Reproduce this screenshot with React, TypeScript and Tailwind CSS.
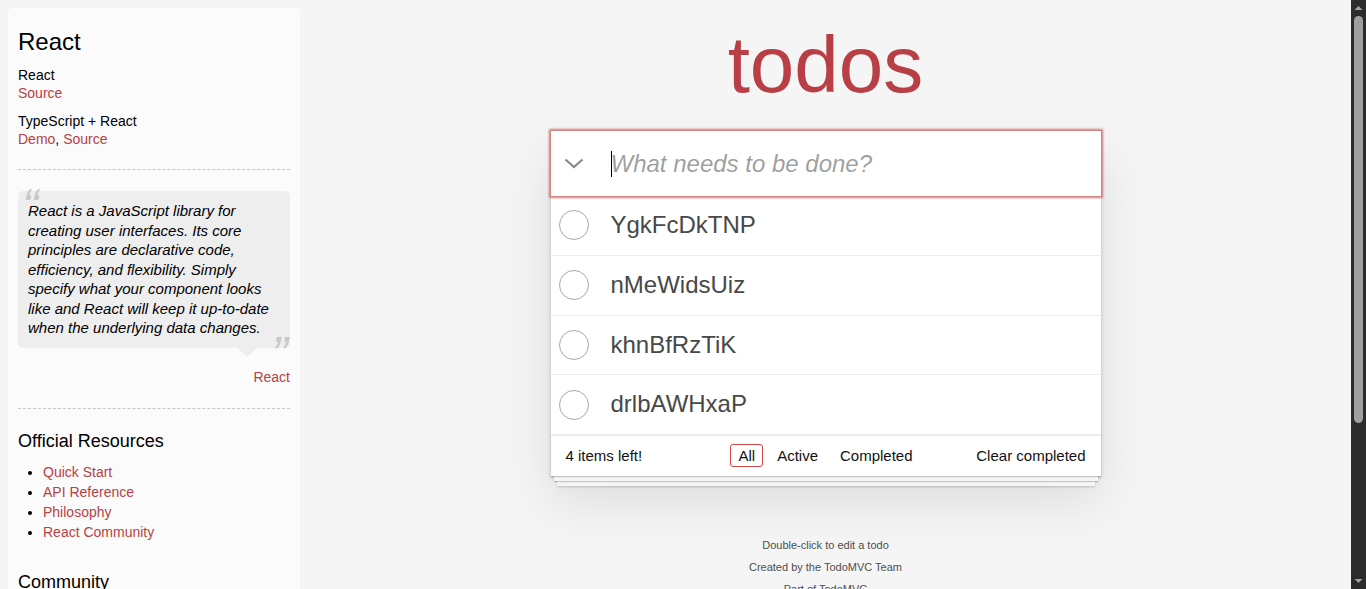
import React from "react";

const todos = ["YgkFcDkTNP", "nMeWidsUiz", "khnBfRzTiK", "drlbAWHxaP"];

function Sidebar() {
  return (
    <aside className="mt-2 ml-2 h-[620px] w-[292px] shrink-0 overflow-hidden rounded-[5px] bg-[#fbfbfb] p-[10px] text-[14px] leading-[1.4] text-black">
      <h3 className="mt-[10px] mb-[10px] text-[24px] leading-[1.2]">React</h3>
      <h5 className="text-[14px] leading-[1.2]">React</h5>
      <p className="pb-[1px] leading-[18px]">
        <a href="#" className="text-[#b83f45]">Source</a>
      </p>
      <h5 className="mt-[10px] mb-[1px] text-[14px] leading-[1.2]">TypeScript + React</h5>
      <p className="pb-[1px] leading-[18px]">
        <a href="#" className="text-[#b83f45]">Demo</a>,{" "}
        <a href="#" className="text-[#b83f45]">Source</a>
      </p>

      <hr className="my-5 border-0 border-t border-dashed border-[#c5c5c5]" />

      <blockquote className="relative mt-[21px] mb-[60px]">
        <p className="relative rounded-[5px] bg-[#eee] p-[10px] text-[15px] italic leading-[19.5px]">
          <span className="absolute -top-[19px] left-[4px] text-[50px] leading-[1.4] text-black opacity-15">“</span>
          React is a JavaScript library for creating user interfaces. Its core principles are declarative code,
          efficiency, and flexibility. Simply specify what your component looks like and React will keep it
          up-to-date when the underlying data changes.
          <span className="absolute right-[2px] -bottom-[42px] text-[50px] leading-[1.4] text-black opacity-15">”</span>
        </p>
        <span className="absolute -bottom-[9px] right-[33px] h-0 w-0 border-x-[10px] border-t-[9px] border-x-transparent border-t-[#eee]" />
        <footer className="absolute -bottom-[40px] right-0">
          <a href="#" className="text-[#b83f45]">React</a>
        </footer>
      </blockquote>

      <hr className="my-5 border-0 border-t border-dashed border-[#c5c5c5]" />

      <h4 className="mt-[22px] mb-[10px] text-[18px] leading-[1.2]">Official Resources</h4>
      <ul className="mb-[30px] list-disc pl-[25px] leading-[20px]">
        <li><a href="#" className="text-[#b83f45]">Quick Start</a></li>
        <li><a href="#" className="text-[#b83f45]">API Reference</a></li>
        <li><a href="#" className="text-[#b83f45]">Philosophy</a></li>
        <li><a href="#" className="text-[#b83f45]">React Community</a></li>
      </ul>

      <h4 className="mt-[10px] mb-[10px] text-[18px] leading-[1.2]">Community</h4>
      <ul className="list-disc pl-[25px] leading-[20px]">
        <li><a href="#" className="text-[#b83f45]">ReactJS on Stack Overflow</a></li>
      </ul>
    </aside>
  );
}

function Circle() {
  return (
    <svg width="30" height="30" viewBox="0 0 30 30" className="shrink-0">
      <circle cx="15" cy="15" r="14.5" fill="none" stroke="#a8a8a8" strokeWidth="1" />
    </svg>
  );
}

function TodoApp() {
  return (
    <section className="w-[550px]">
      <h1 className="mt-[25px] mb-[26px] text-center text-[80px] leading-[80px] font-extralight text-[#b83f45]">
        todos
      </h1>

      <div className="relative bg-white shadow-[0_2px_4px_0_rgba(0,0,0,0.2),0_25px_50px_0_rgba(0,0,0,0.1)]">
        <header className="relative">
          <div className="pointer-events-none absolute top-0 left-0 flex h-[65px] w-[45px] items-center justify-center pl-[2px]">
            <svg width="20" height="11" viewBox="0 0 20 11">
              <polyline points="1.5,1.5 10,9 18.5,1.5" fill="none" stroke="#8a8a8a" strokeWidth="2.2" />
            </svg>
          </div>
          <input
            className="block h-[65px] w-full bg-white py-4 pr-4 pl-[60px] text-[24px] italic leading-[1.4] text-[#111] shadow-[0_0_2px_2px_#cf7d7d] outline-none placeholder:text-[rgba(0,0,0,0.4)]"
            placeholder="What needs to be done?"
          />
          <span className="pointer-events-none absolute top-[20px] left-[60px] h-[26px] w-px bg-black" />
        </header>

        <ul>
          {todos.map((t) => (
            <li key={t} className="flex items-center border-b border-[#ededed] text-[24px]">
              <div className="flex w-[45px] justify-center pl-[1px]">
                <Circle />
              </div>
              <label className="py-[15px] pl-[15px] leading-[1.2] text-[#484848]">{t}</label>
            </li>
          ))}
        </ul>

        <footer className="relative flex h-[41px] items-center justify-between border-t border-[#e6e6e6] px-[15px] pb-[1px] text-[15px] leading-[20px] text-[#111]">
          <div className="pointer-events-none absolute right-0 bottom-0 left-0 h-[50px] overflow-hidden shadow-[0_1px_1px_rgba(0,0,0,0.2),0_8px_0_-3px_#f6f6f6,0_9px_1px_-3px_rgba(0,0,0,0.2),0_16px_0_-6px_#f6f6f6,0_17px_2px_-6px_rgba(0,0,0,0.2)]" />
          <span className="relative">4 items left!</span>
          <ul className="absolute right-0 left-0 flex justify-center">
            <li>
              <a href="#" className="m-[3px] inline-block rounded-[3px] border border-[#ce4646] px-[7px] py-[3px] leading-[15px]">All</a>
            </li>
            <li>
              <a href="#" className="m-[3px] inline-block rounded-[3px] border border-transparent px-[7px] py-[3px] leading-[15px]">Active</a>
            </li>
            <li>
              <a href="#" className="m-[3px] inline-block rounded-[3px] border border-transparent px-[7px] py-[3px] leading-[15px]">Completed</a>
            </li>
          </ul>
          <button className="relative text-[15px] leading-[20px] text-[#111]">Clear completed</button>
        </footer>
      </div>

      <div className="mt-[64px] text-center text-[11px] text-[#4d4d4d] [text-shadow:0_1px_0_rgba(255,255,255,0.5)]">
        <p className="my-[11px] leading-none">Double-click to edit a todo</p>
        <p className="my-[11px] leading-none">Created by the TodoMVC Team</p>
        <p className="my-[11px] leading-none">Part of TodoMVC</p>
      </div>
    </section>
  );
}

// page scrollbar, dark scheme
function Scrollbar() {
  return (
    <div className="flex h-screen w-[15px] shrink-0 flex-col items-center bg-[#2b2b2b]">
      <svg width="15" height="16" viewBox="0 0 15 16" className="shrink-0">
        <polygon points="3.5,10 7.5,6 11.5,10" fill="#a3a3a3" />
      </svg>
      <div className="h-[407px] w-[9px] rounded-full bg-[#9f9f9f]" />
      <div className="flex-1" />
      <svg width="15" height="16" viewBox="0 0 15 16" className="shrink-0">
        <polygon points="3.5,6 7.5,10 11.5,6" fill="#a3a3a3" />
      </svg>
    </div>
  );
}

export default function App() {
  return (
    <div className="flex h-screen overflow-hidden bg-[#f5f5f5] text-[#111] font-['Liberation_Sans',Arial,sans-serif]">
      <div className="flex min-w-0 flex-1 items-start">
        <Sidebar />
        <main className="flex flex-1 justify-center">
          <TodoApp />
        </main>
      </div>
      <Scrollbar />
    </div>
  );
}
